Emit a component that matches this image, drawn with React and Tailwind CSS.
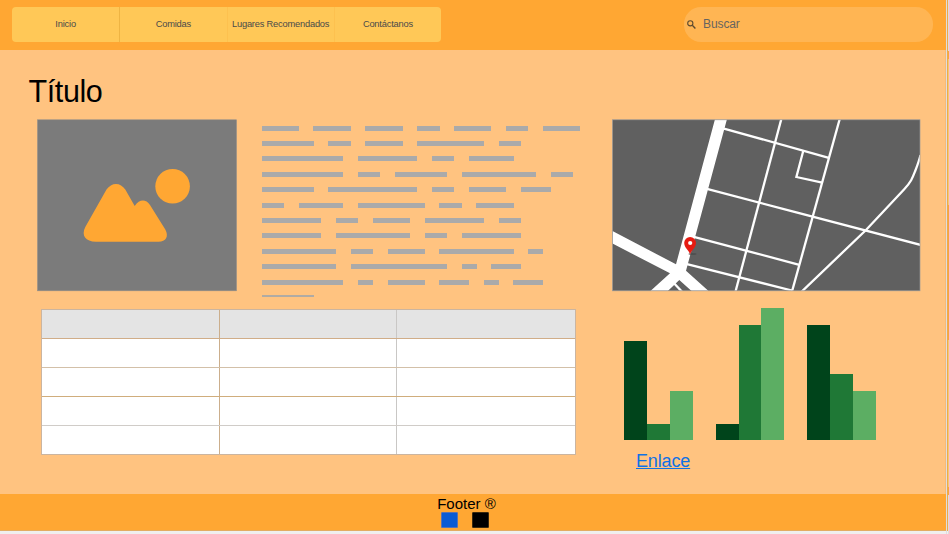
import React from "react";

const NAV = ["Inicio", "Comidas", "Lugares Recomendados", "Contáctanos"];

// Word lengths, in characters, for every line of placeholder text.
const LINES = [
  [5, 5, 5, 3, 5, 3, 5],
  [7, 3, 5, 9, 3],
  [11, 8, 3, 6],
  [11, 3, 7, 10, 3],
  [7, 12, 3, 5, 4],
  [3, 6, 9, 3, 5],
  [8, 3, 5, 8, 3],
  [8, 10, 3, 8],
  [10, 3, 5, 10, 2],
  [10, 13, 2, 4],
  [11, 2, 5, 4, 2, 4],
];
const CHAR = 7.41;

const GROUPS = [
  [6, 1, 3],
  [1, 7, 8],
  [7, 4, 3],
];
const GREENS = ["bg-[#00441b]", "bg-[#1f7836]", "bg-[#5cae63]"];
const ROW_LINES = [
  "border-b border-[#d0ad88]",
  "border-b border-[#d3c0a8]",
  "border-b border-[#d0ad7c]",
  "border-b border-[#d0ccc8]",
  "",
];

function Header() {
  return (
    <header className="flex h-[50px] items-start justify-between bg-[#ffa733] pt-[7px] pr-[13px] pl-3">
      <nav className="flex h-[35px] w-[429px] overflow-hidden rounded-[4px] bg-[#ffc857]">
        {NAV.map((label, i) => (
          <a
            key={label}
            className={
              "flex w-[107.25px] items-center justify-center text-[9.3px] leading-[11px] tracking-[-0.2px] whitespace-nowrap text-[#4a4a4a] " +
              (i === 1 ? "border-l border-[#eeb443]" : i > 1 ? "border-l border-[#fdc14f]" : "")
            }
          >
            {label}
          </a>
        ))}
      </nav>
      <div className="flex h-[35px] w-[249px] items-center rounded-[17px] bg-[#ffb553] pl-[3px]">
        <svg className="h-[9px] w-[9px]" viewBox="0 0 9 9" fill="none" stroke="#5c4a30">
          <circle cx="3.3" cy="3.3" r="2.6" strokeWidth="1.1" />
          <path d="M5.3 5.3L8.4 8.4" strokeWidth="1.4" />
        </svg>
        <span className="ml-[7px] pb-px text-[12px] tracking-[-0.1px] text-[#666460]">Buscar</span>
      </div>
    </header>
  );
}

function Picture() {
  return (
    <svg className="h-[173px] w-[200px] shrink-0" viewBox="37 119 200 173">
      <rect x="37.5" y="119.8" width="199" height="171" fill="#7b7b7b" stroke="#949089" strokeWidth="0.6" />
      <circle cx="172.6" cy="186.3" r="17.3" fill="#ffa733" />
      <path
        fill="#ffa733"
        d="M106.5 189.5C111.5 182 120.5 182 125.3 189.5L134.7 206C139.5 199 145.8 199 150 205L165.3 229.5C169 236.5 166 241.7 158.5 241.7H96C85.5 241.7 81 235.5 85.3 227Z"
      />
    </svg>
  );
}

function Paragraph() {
  return (
    <div className="ml-[24.6px] flex w-[320px] flex-col gap-[10.4px] pt-[6.6px]">
      {LINES.map((words, i) => (
        <div key={i} className="flex h-[5px] shrink-0 gap-[14.62px]">
          {words.map((n, j) => (
            <span key={j} className="shrink-0 bg-[#aaaaaa]" style={{ width: n * CHAR + 0.2 }} />
          ))}
        </div>
      ))}
      <div className="h-[2px] w-[52px] shrink-0 bg-[#b0aba4]" />
    </div>
  );
}

function Map() {
  return (
    <svg className="h-[173px] w-[309px]" viewBox="612 119 309 173">
      <defs>
        <clipPath id="frame">
          <rect x="612.5" y="119.8" width="307.5" height="171" />
        </clipPath>
      </defs>
      <rect x="612.5" y="119.8" width="307.5" height="171" fill="#606060" />
      <g clipPath="url(#frame)">
        <path
          fill="#fff"
          d="M715.3 118L727.3 118L686 270.7L710 292.3H693L679.3 280L666.5 292.3H649L670 273.3L611 242.8V230.2L676 264.3Z"
        />
        <g fill="none" stroke="#fff" strokeWidth="2.3">
          <path d="M674.3 283.5L682.5 292.3" />
          <path d="M723 128.3L828.8 157.8" />
          <path d="M706 188.6L792.5 211.4L921 245" />
          <path d="M692 236.3L799.3 264.8" />
          <path d="M685 263.6L792 290.5" />
          <path d="M781.6 118L735.3 292.3" />
          <path d="M840 118L792 291.5" />
          <path d="M803.3 150.7L796.4 177L822.2 182.7" />
          <path d="M801 292.3L866 230L904 189.5C911 182 912.5 178 915 171.5C917 166.5 919 161.5 920.5 155" />
        </g>
      </g>
      <rect x="612.5" y="119.8" width="307.5" height="171" fill="none" stroke="#999" strokeWidth="0.7" />
      <ellipse cx="692.5" cy="254" rx="4" ry="1" fill="#494949" opacity="0.7" />
      <path
        fill="#e61b12"
        d="M690.1 254C688.6 250.5 684.2 247.4 684.2 242.8A5.9 5.9 0 0 1 696 242.8C696 247.4 691.6 250.5 690.1 254Z"
      />
      <circle cx="690.2" cy="243" r="2.1" fill="#fff" />
    </svg>
  );
}

function Table() {
  return (
    <div className="mt-[17px] ml-1 flex h-[146px] w-[534.5px] flex-col border border-[#cbb5a0]">
      {ROW_LINES.map((line, r) => (
        <div
          key={r}
          className={"flex " + (r === 4 ? "h-[28px] " : "h-[29px] ") + (r === 0 ? "bg-[#e4e4e4] " : "bg-white ") + line}
        >
          <div className="w-[178px] border-r border-[#cbae8c]" />
          <div className="w-[177px] border-r border-[#c9c7c5]" />
          <div className="flex-1" />
        </div>
      ))}
    </div>
  );
}

function Chart() {
  return (
    <div className="mt-[16px] ml-[12.3px] flex h-[132px] items-end gap-[22.9px]">
      {GROUPS.map((group, g) => (
        <div key={g} className="flex items-end">
          {group.map((v, i) => (
            <div key={i} className={"w-[22.85px] " + GREENS[i]} style={{ height: v * 16.5 }} />
          ))}
        </div>
      ))}
    </div>
  );
}

export default function App() {
  return (
    <div className="flex h-[534px] w-[949px] overflow-hidden bg-[#efefef] font-['Liberation_Sans',Arial,sans-serif]">
      <div className="flex h-[531px] w-[946px] flex-col">
        <Header />
        <main className="flex h-[443.5px] flex-col border-r border-[#f6ba78] bg-[#ffc380]">
          <h1 className="mt-[24px] ml-[28.5px] h-[45px] shrink-0 text-[30.5px] leading-[35px] tracking-[-0.4px] text-black">
            Título
          </h1>
          <div className="flex pl-[37px]">
            <section className="w-[575px]">
              <div className="flex h-[173px]">
                <Picture />
                <Paragraph />
              </div>
              <Table />
            </section>
            <section className="w-[309px]">
              <Map />
              <Chart />
              <a className="mt-[10px] ml-6 inline-block text-[18px] leading-[22px] tracking-[-0.15px] text-[#1071e5] underline">
                Enlace
              </a>
            </section>
          </div>
        </main>
        <footer className="flex flex-1 flex-col items-center border-b border-[#e2ac62] bg-[#ffa733] pr-[13px] pt-[1.5px]">
          <span className="text-[15px] leading-[17px] text-black">Footer ®</span>
          <div className="mr-[3px] flex gap-[14px]">
            <span className="h-4 w-[17px] rounded-[1px] border border-[#5a72b0] bg-[#0b5bd3]" />
            <span className="h-4 w-[17px] rounded-[1px] border border-[#3a2a10] bg-black" />
          </div>
        </footer>
      </div>
      <div className="w-px bg-[#dedede]" />
      <div className="h-[531px] w-px bg-[#f0a94a]" />
      <div className="flex w-px flex-col bg-[#dfddda]">
        <div className="h-[51px]" />
        <div className="h-[8px] bg-[#f5a83f]" />
        <div className="h-[146px] bg-[#f3cb74]" />
        <div className="h-[135px] bg-[#f5a443]" />
        <div className="h-[147px] bg-[#f3cb74]" />
        <div className="h-[8px] bg-[#f5a83f]" />
      </div>
    </div>
  );
}
